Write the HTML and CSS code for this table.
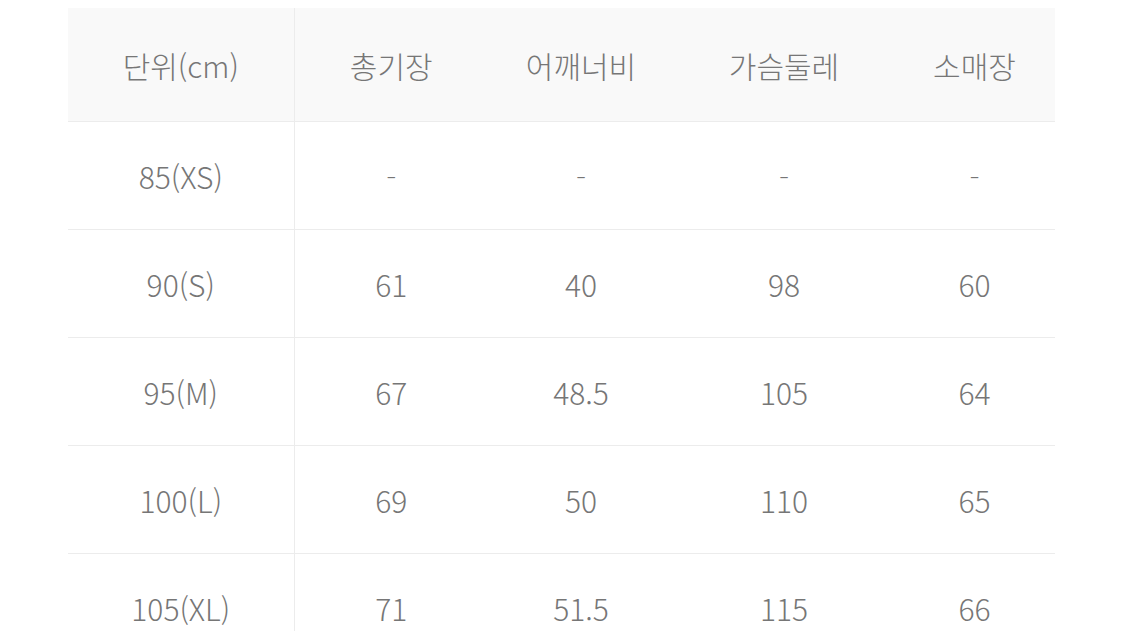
FILE: index.html
```html
<!DOCTYPE html>
<html lang="ko">
<head>
<meta charset="utf-8">
<link rel="stylesheet" href="styles.css">
</head>
<body>
<div class="wrap">
<table class="size-table">
  <colgroup>
    <col class="c1"><col class="c2"><col class="c3"><col class="c4"><col class="c5">
  </colgroup>
  <thead>
    <tr><th class="first">단위(cm)</th><th>총기장</th><th>어깨너비</th><th>가슴둘레</th><th>소매장</th></tr>
  </thead>
  <tbody>
    <tr><td class="first">85(XS)</td><td class="dash">-</td><td class="dash">-</td><td class="dash">-</td><td class="dash">-</td></tr>
    <tr><td class="first">90(S)</td><td>61</td><td>40</td><td>98</td><td>60</td></tr>
    <tr><td class="first">95(M)</td><td>67</td><td>48.5</td><td>105</td><td>64</td></tr>
    <tr><td class="first">100(L)</td><td>69</td><td>50</td><td>110</td><td>65</td></tr>
    <tr><td class="first">105(XL)</td><td>71</td><td>51.5</td><td>115</td><td>66</td></tr>
  </tbody>
</table>
</div>
</body>
</html>
```
FILE: styles.css
```css
html, body {
  margin: 0;
  padding: 0;
  background: #ffffff;
  overflow: hidden;
  height: 631px;
}
.wrap {
  padding: 8px 0 0 68px;
}
.size-table {
  border-collapse: collapse;
  table-layout: fixed;
  width: 987px;
  font-family: "Noto Sans CJK KR", "Noto Sans", sans-serif;
  font-size: 30px;
  font-weight: 300;
  color: #767676;
}
.c1 { width: 226px; }
.c2 { width: 194px; }
.c3 { width: 186px; }
.c4 { width: 220px; }
.c5 { width: 161px; }
.size-table th,
.size-table td {
  text-align: center;
  font-weight: 300;
  padding: 0;
  border-bottom: 1px solid #ececec;
}
.size-table thead th {
  background: #f9f9f9;
  height: 113px;
}
.size-table tbody td {
  height: 107px;
}
.size-table .first {
  border-right: 1px solid #ececec;
}
.size-table .dash {
  font-family: "DejaVu Sans", sans-serif;
  font-weight: 300;
  font-size: 28px;
}
```
